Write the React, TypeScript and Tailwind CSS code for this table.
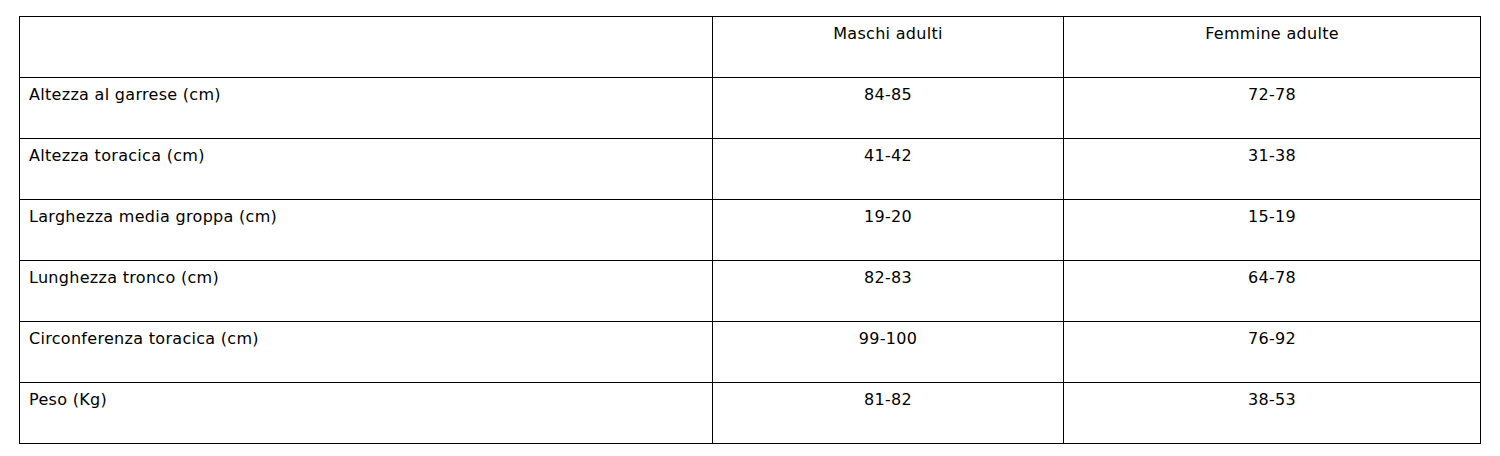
const rows: [string, string, string][] = [
  ['', 'Maschi adulti', 'Femmine adulte'],
  ['Altezza al garrese (cm)', '84-85', '72-78'],
  ['Altezza toracica (cm)', '41-42', '31-38'],
  ['Larghezza media groppa (cm)', '19-20', '15-19'],
  ['Lunghezza tronco (cm)', '82-83', '64-78'],
  ['Circonferenza toracica (cm)', '99-100', '76-92'],
  ['Peso (Kg)', '81-82', '38-53'],
];

export default function App(): JSX.Element {
  return (
    <div className="w-[1500px] h-[456px] bg-white pt-4 pl-[19px] font-['DejaVu_Sans',Verdana,sans-serif] text-[16px] tracking-[0.3px] text-black">
      <div className="grid w-[1462px] grid-cols-[693px_351px_417px] border-l border-t border-black">
        {rows.map((row, i) =>
          row.map((cell, j) => (
            <div
              key={`${i}-${j}`}
              className={`h-[61px] border-b border-r border-black pt-[8px] px-[9px] leading-[17px] ${
                j === 0 ? 'text-left' : 'text-center'
              }`}
            >
              {cell}
            </div>
          ))
        )}
      </div>
    </div>
  );
}
